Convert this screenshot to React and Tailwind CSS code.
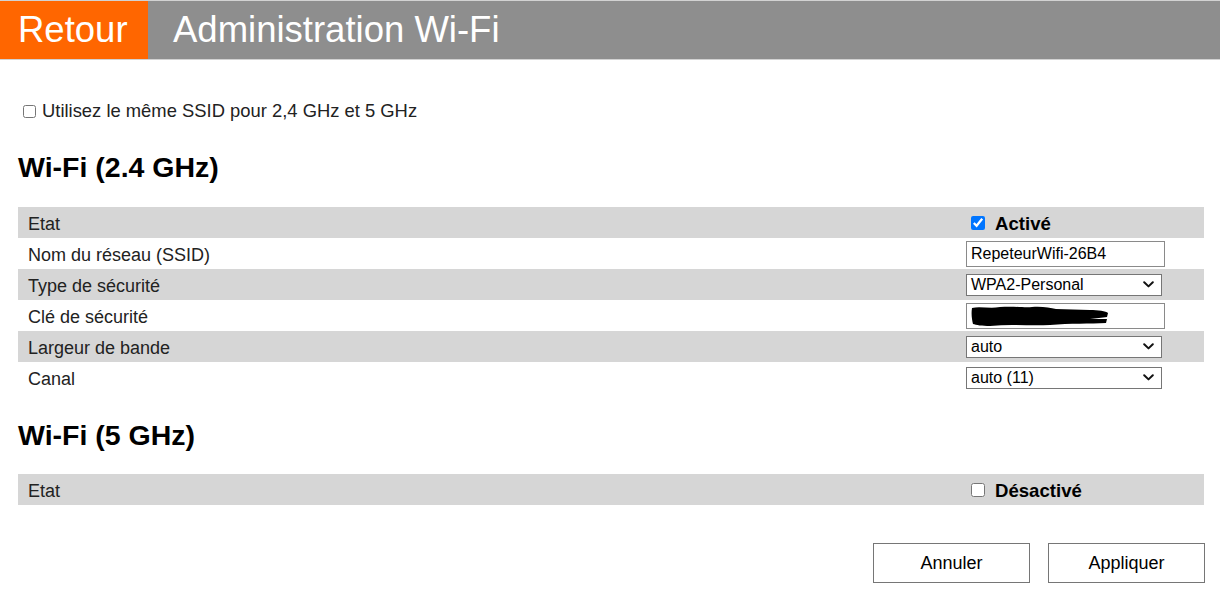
import React from "react";

const font = { fontFamily: '"Liberation Sans", Arial, Helvetica, sans-serif' };

function Chevron() {
  return (
    <svg width="11" height="7" viewBox="0 0 11 7" className="shrink-0">
      <path d="M1.2 1.2 L5.5 5.4 L9.8 1.2" fill="none" stroke="#111" strokeWidth="2" strokeLinecap="round" strokeLinejoin="round" />
    </svg>
  );
}

function Select({ value }) {
  return (
    <div className="flex h-[22px] w-[196px] items-center justify-between border border-[#767676] bg-white pl-[4px] pr-[7px] text-[16px] leading-none text-black">
      <span>{value}</span>
      <Chevron />
    </div>
  );
}

function TextInput({ children }) {
  return (
    <div className="flex h-[26px] w-[199px] items-center border border-[#8a8a8a] bg-white pl-[4px] text-[16px] leading-none text-black">
      {children}
    </div>
  );
}

function Row({ label, gray, children }) {
  return (
    <div className={`grid h-[31px] grid-cols-[948px_1fr] items-center ${gray ? "bg-[#d6d6d6]" : "bg-white"}`}>
      <div className="pl-[10px] pt-[2px] text-[18px] leading-none text-[#222]">{label}</div>
      <div className="flex items-center">{children}</div>
    </div>
  );
}

function StateCell({ checked, label }) {
  return (
    <div className="flex items-center">
      <input
        type="checkbox"
        defaultChecked={checked}
        className="m-0 ml-[5px] h-[14px] w-[14px]"
      />
      <span className="ml-[10px] pt-[3px] text-[18.6px] font-bold leading-none text-black">{label}</span>
    </div>
  );
}

function Redacted() {
  return (
    <svg width="140" height="22" viewBox="0 0 140 22" className="-ml-[1px]">
      <path
        d="M2 3 C 10 1, 20 4, 30 2 C 45 1, 55 3, 62 2 C 72 1, 80 3, 86 4 L 120 5 C 128 5, 136 6, 138 8 L 137 12 C 132 13, 126 13, 120 14 L 137 14 L 136 18 C 120 19, 100 18, 80 20 C 60 21, 40 19, 20 21 C 12 21, 6 20, 3 19 C 2 15, 1 9, 2 3 Z"
        fill="#000"
      />
    </svg>
  );
}

export default function App() {
  return (
    <div style={font} className="min-h-[595px] w-full bg-white text-black">
      <header className="flex h-[60px] border-y border-[#d2d2d2]">
        <div className="flex w-[148px] items-center bg-[#ff6600] pl-[18px] text-[36.5px] leading-none text-white">
          Retour
        </div>
        <div className="flex flex-1 items-center bg-[#8e8e8e] pl-[25px] text-[36.5px] leading-none text-white">
          Administration Wi-Fi
        </div>
      </header>

      <main className="pl-[18px] pr-[16px]">
        <label className="mt-[40px] flex h-[22px] items-center">
          <input type="checkbox" className="m-0 ml-[5px] h-[13px] w-[13px]" />
          <span className="ml-[6px] text-[18.4px] leading-none text-[#222]">
            Utilisez le même SSID pour 2,4 GHz et 5 GHz
          </span>
        </label>

        <h2 className="mt-[29px] h-[32px] text-[28.5px] font-bold leading-[32px]">Wi-Fi (2.4 GHz)</h2>

        <div className="mt-[24px] flex flex-col">
          <Row label="Etat" gray>
            <StateCell checked label="Activé" />
          </Row>
          <Row label="Nom du réseau (SSID)">
            <TextInput>RepeteurWifi-26B4</TextInput>
          </Row>
          <Row label="Type de sécurité" gray>
            <Select value="WPA2-Personal" />
          </Row>
          <Row label="Clé de sécurité">
            <TextInput>
              <Redacted />
            </TextInput>
          </Row>
          <Row label="Largeur de bande" gray>
            <Select value="auto" />
          </Row>
          <Row label="Canal">
            <Select value="auto (11)" />
          </Row>
        </div>

        <h2 className="mt-[26px] h-[32px] text-[28.5px] font-bold leading-[32px]">Wi-Fi (5 GHz)</h2>

        <div className="mt-[23px] flex flex-col">
          <Row label="Etat" gray>
            <StateCell checked={false} label="Désactivé" />
          </Row>
        </div>

        <div className="mt-[38px] flex justify-end gap-[18px]">
          <button className="h-[40px] w-[157px] border border-[#767676] bg-white text-[18px] text-black">
            Annuler
          </button>
          <button className="-mr-[1px] h-[40px] w-[157px] border border-[#767676] bg-white text-[18px] text-black">
            Appliquer
          </button>
        </div>
      </main>
    </div>
  );
}
